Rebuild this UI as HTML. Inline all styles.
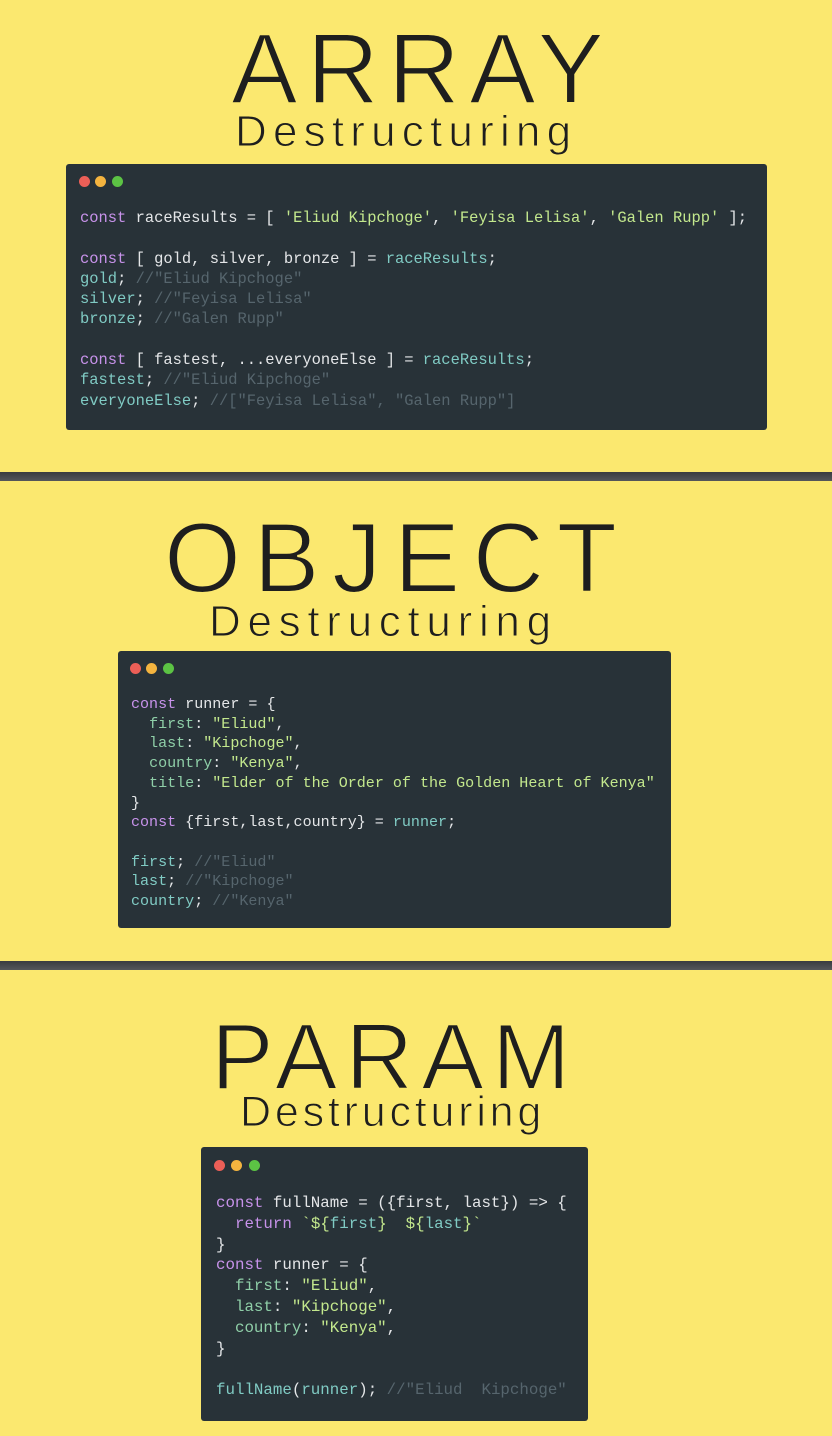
<!DOCTYPE html>
<html><head><meta charset="utf-8"><style>
*{margin:0;padding:0;box-sizing:border-box}
body{width:832px;height:1436px;background:#fbe86f;position:relative;overflow:hidden;font-family:"Liberation Sans",sans-serif}
.sep{position:absolute;left:0;width:832px;height:9px;background:linear-gradient(#3a3c40,#55575b)}
.t{position:absolute;color:#1e1e1e;white-space:nowrap;line-height:1;-webkit-text-stroke:2px #fbe86f;paint-order:normal}
.d{-webkit-text-stroke:1px #fbe86f}
.card{position:absolute;background:#283238;border-radius:3px}
.dot{position:absolute;width:11px;height:11px;border-radius:50%}
pre{position:absolute;font-family:"Liberation Mono",monospace;color:#e4e6e8;white-space:pre}
.k{color:#c792ea}.s{color:#c3e88d}.v{color:#80cbc4}.c{color:#56656d}.p{color:#8fcfa8}
</style></head><body>
<div class="t" style="left:231px;top:19px;font-size:100px;letter-spacing:9px">ARRAY</div>
<div class="t d" style="left:235px;top:110px;font-size:44px;letter-spacing:6.2px">Destructuring</div>
<div class="card" style="left:66px;top:164px;width:701px;height:266px">
<div class="dot" style="left:13px;top:12px;background:#ec5f57"></div>
<div class="dot" style="left:29px;top:12px;background:#f4b43f"></div>
<div class="dot" style="left:46px;top:12px;background:#5cc344"></div>
<pre style="left:14px;top:44px;font-size:15.45px;line-height:20.3px"><span class="k">const</span> raceResults = [ <span class="s">'Eliud Kipchoge'</span>, <span class="s">'Feyisa Lelisa'</span>, <span class="s">'Galen Rupp'</span> ];

<span class="k">const</span> [ gold, silver, bronze ] = <span class="v">raceResults</span>;
<span class="v">gold</span>; <span class="c">//"Eliud Kipchoge"</span>
<span class="v">silver</span>; <span class="c">//"Feyisa Lelisa"</span>
<span class="v">bronze</span>; <span class="c">//"Galen Rupp"</span>

<span class="k">const</span> [ fastest, ...everyoneElse ] = <span class="v">raceResults</span>;
<span class="v">fastest</span>; <span class="c">//"Eliud Kipchoge"</span>
<span class="v">everyoneElse</span>; <span class="c">//["Feyisa Lelisa", "Galen Rupp"]</span></pre>
</div>
<div class="sep" style="top:472px"></div>
<div class="t" style="left:164px;top:508px;font-size:99px;letter-spacing:12.5px">OBJECT</div>
<div class="t d" style="left:209px;top:600px;font-size:44px;letter-spacing:6.7px">Destructuring</div>
<div class="card" style="left:118px;top:651px;width:553px;height:277px">
<div class="dot" style="left:12px;top:12px;background:#ec5f57"></div>
<div class="dot" style="left:28px;top:12px;background:#f4b43f"></div>
<div class="dot" style="left:45px;top:12px;background:#5cc344"></div>
<pre style="left:13px;top:44px;font-size:15.05px;line-height:19.7px"><span class="k">const</span> runner = {
  <span class="p">first</span>: <span class="s">"Eliud"</span>,
  <span class="p">last</span>: <span class="s">"Kipchoge"</span>,
  <span class="p">country</span>: <span class="s">"Kenya"</span>,
  <span class="p">title</span>: <span class="s">"Elder of the Order of the Golden Heart of Kenya"</span>
}
<span class="k">const</span> {first,last,country} = <span class="v">runner</span>;

<span class="v">first</span>; <span class="c">//"Eliud"</span>
<span class="v">last</span>; <span class="c">//"Kipchoge"</span>
<span class="v">country</span>; <span class="c">//"Kenya"</span></pre>
</div>
<div class="sep" style="top:961px"></div>
<div class="t" style="left:211px;top:1010px;font-size:94px;letter-spacing:8px">PARAM</div>
<div class="t d" style="left:240px;top:1091px;font-size:43px;letter-spacing:3.8px">Destructuring</div>
<div class="card" style="left:201px;top:1147px;width:387px;height:274px">
<div class="dot" style="left:13px;top:13px;background:#ec5f57"></div>
<div class="dot" style="left:30px;top:13px;background:#f4b43f"></div>
<div class="dot" style="left:48px;top:13px;background:#5cc344"></div>
<pre style="left:15px;top:46px;font-size:15.8px;line-height:20.8px"><span class="k">const</span> fullName = ({first, last}) =&gt; {
  <span class="k">return</span> <span class="s">`${</span><span class="v">first</span><span class="s">}  ${</span><span class="v">last</span><span class="s">}`</span>
}
<span class="k">const</span> runner = {
  <span class="p">first</span>: <span class="s">"Eliud"</span>,
  <span class="p">last</span>: <span class="s">"Kipchoge"</span>,
  <span class="p">country</span>: <span class="s">"Kenya"</span>,
}

<span class="v">fullName</span>(<span class="v">runner</span>); <span class="c">//"Eliud  Kipchoge"</span></pre>
</div>
</body></html>
